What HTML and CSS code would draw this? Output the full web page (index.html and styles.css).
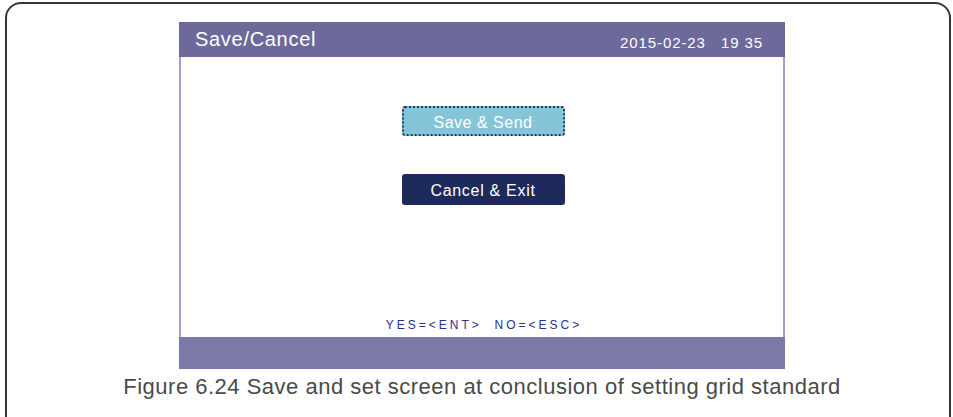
FILE: index.html
```html
<!DOCTYPE html>
<html lang="en">

<head>
    <meta charset="UTF-8">
    <meta name="viewport" content="width=device-width, initial-scale=1.0">
    <title>Save/Cancel</title>
    <link rel="stylesheet" href="styles.css">
</head>

<body>
    <div class="frame">
        <div class="column">
            <div class="screen">
                <div class="screen-header">
                    <span class="title">Save/Cancel</span>
                    <span class="clock">2015-02-23&nbsp;&nbsp; 19 35</span>
                </div>
                <div class="screen-body">
                    <div class="menu">
                        <div class="btn btn-selected">Save &amp; Send</div>
                        <div class="btn btn-dark">Cancel &amp; Exit</div>
                    </div>
                    <div class="hint">YES=&lt;ENT&gt;&nbsp; NO=&lt;ESC&gt;</div>
                </div>
                <div class="screen-footer"></div>
            </div>
            <p class="caption">Figure 6.24 Save and set screen at conclusion of setting grid standard</p>
        </div>
    </div>
</body>

</html>
```

FILE: styles.css
```css
body {
    font-family: "Liberation Sans", Arial, sans-serif;
    margin: 0;
    padding: 0;
    background-color: #fff;
}

.frame {
    box-sizing: border-box;
    height: 432px;
    margin: 2px 2px 0 5px;
    padding-top: 18px;
    border: 2px solid #3a3535;
    border-radius: 16px;
}

.column {
    width: 606px;
    margin-left: 172px;
    display: flex;
    flex-direction: column;
    align-items: center;
}

.screen {
    width: 100%;
}

.screen-header {
    height: 35px;
    background-color: #6d699b;
    color: #fff;
    display: flex;
    justify-content: space-between;
    align-items: center;
    padding: 0 22px 0 16px;
}

.title {
    font-size: 20px;
    letter-spacing: 0.7px;
}

.clock {
    font-size: 15px;
    letter-spacing: 0.9px;
    padding-top: 6px;
}

.screen-body {
    height: 280px;
    background-color: #fff;
    border-left: 2px solid #a39ecb;
    border-right: 2px solid #a39ecb;
    display: flex;
    flex-direction: column;
    align-items: center;
}

.menu {
    margin-top: 49px;
    margin-left: 2px;
    display: flex;
    flex-direction: column;
    gap: 38px;
}

.btn {
    box-sizing: border-box;
    width: 163px;
    height: 30px;
    border-radius: 3px;
    color: #fff;
    font-size: 16px;
    letter-spacing: 0.7px;
    display: flex;
    align-items: center;
    justify-content: center;
}

.btn-selected {
    background-color: #86c4d7;
    border: 2px dotted #2a3560;
    letter-spacing: 0.5px;
    padding-top: 3px;
}

.btn-dark {
    height: 31px;
    background-color: #1f2a5c;
    padding-top: 2px;
}

.hint {
    margin-top: auto;
    margin-bottom: 5px;
    margin-left: 4px;
    color: #2b2f8c;
    font-size: 12px;
    letter-spacing: 3px;
}

.screen-footer {
    height: 32px;
    background-color: #7b79a8;
}

.caption {
    margin: 5px 0 0;
    white-space: nowrap;
    color: #4a4a4a;
    font-size: 22px;
    line-height: 26px;
    letter-spacing: 0.5px;
}
```
